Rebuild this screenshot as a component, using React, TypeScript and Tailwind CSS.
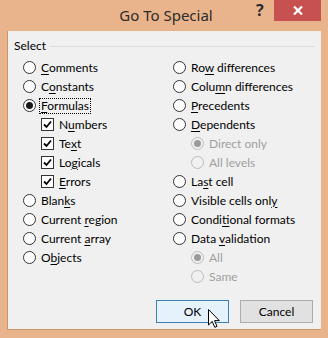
import React from "react";

// label uses "&" before the mnemonic letter
function Mnemonic({ text }: { text: string }) {
  const i = text.indexOf("&");
  if (i < 0) return <>{text}</>;
  return (
    <>
      {text.slice(0, i)}
      <span className="underline underline-offset-2">{text[i + 1]}</span>
      {text.slice(i + 2)}
    </>
  );
}

function Radio({ checked, disabled }: { checked?: boolean; disabled?: boolean }) {
  return (
    <span
      className={`w-[13px] h-[13px] rounded-full border flex items-center justify-center shrink-0 ${
        disabled ? "border-[#bcbcbc] bg-[#f0f0f0]" : "border-[#333333] bg-white"
      }`}
    >
      {checked && (
        <span className={`w-[7px] h-[7px] rounded-full ${disabled ? "bg-[#9a9a9a]" : "bg-[#1a1a1a]"}`} />
      )}
    </span>
  );
}

function Check() {
  return (
    <span className="w-[13px] h-[13px] border border-[#333333] bg-white flex items-center justify-center shrink-0">
      <svg width="9" height="9" viewBox="0 0 9 9">
        <path d="M1 4.5 L3.5 7 L8 1.5" fill="none" stroke="#000" strokeWidth="1.8" />
      </svg>
    </span>
  );
}

type Item = { label: string; kind: "radio" | "check"; checked?: boolean; disabled?: boolean; indent?: boolean; focus?: boolean };

const LEFT: Item[] = [
  { label: "&Comments", kind: "radio" },
  { label: "C&onstants", kind: "radio" },
  { label: "&Formulas", kind: "radio", checked: true, focus: true },
  { label: "N&umbers", kind: "check", indent: true },
  { label: "Te&xt", kind: "check", indent: true },
  { label: "Lo&gicals", kind: "check", indent: true },
  { label: "&Errors", kind: "check", indent: true },
  { label: "Blan&ks", kind: "radio" },
  { label: "Current &region", kind: "radio" },
  { label: "Current &array", kind: "radio" },
  { label: "O&bjects", kind: "radio" },
];

const RIGHT: Item[] = [
  { label: "Ro&w differences", kind: "radio" },
  { label: "Colu&mn differences", kind: "radio" },
  { label: "&Precedents", kind: "radio" },
  { label: "&Dependents", kind: "radio" },
  { label: "Direct only", kind: "radio", indent: true, disabled: true, checked: true },
  { label: "All levels", kind: "radio", indent: true, disabled: true },
  { label: "La&st cell", kind: "radio" },
  { label: "Visible cells onl&y", kind: "radio" },
  { label: "Condi&tional formats", kind: "radio" },
  { label: "Data &validation", kind: "radio" },
  { label: "All", kind: "radio", indent: true, disabled: true, checked: true },
  { label: "Same", kind: "radio", indent: true, disabled: true },
];

function Row({ item }: { item: Item }) {
  return (
    <div className={`h-[19px] flex items-center gap-[4px] ${item.indent ? "pl-[18px]" : ""}`}>
      {item.kind === "radio" ? <Radio checked={item.checked} disabled={item.disabled} /> : <Check />}
      <span
        className={`leading-[14px] px-px ${item.disabled ? "text-[#a0a0a0]" : "text-black"} ${
          item.focus ? "outline outline-1 outline-dotted outline-black" : ""
        }`}
      >
        <Mnemonic text={item.label} />
      </span>
    </div>
  );
}

export default function App() {
  return (
    <div
      className="w-[328px] h-[338px] bg-[#e9b48b] flex flex-col relative text-[12px]"
      style={{ fontFamily: 'Lato, "Noto Sans", sans-serif' }}
    >
      {/* title bar */}
      <div className="h-[31px] flex relative shrink-0">
        <div
          className="flex-1 flex justify-center pt-[4px] text-[15px] text-[#2b2b2b] pl-[4px]"
          style={{ fontFamily: '"Noto Sans", sans-serif' }}
        >
          Go To Special
        </div>
        <div
          className="absolute left-[256px] top-[1px] text-[16px] font-bold text-[#2b2b2b] leading-[18px]"
          style={{ fontFamily: '"Noto Sans", sans-serif' }}
        >
          ?
        </div>
        <div className="absolute right-[7px] top-0 w-[47px] h-[21px] bg-[#c75050] flex items-center justify-center">
          <svg width="10" height="9" viewBox="0 0 10 9">
            <path d="M1 0.5 L9 8.5 M9 0.5 L1 8.5" stroke="#fff" strokeWidth="2.2" />
          </svg>
        </div>
      </div>

      {/* client area */}
      <div className="mx-[7px] h-[299px] bg-[#f0f0f0] border-l border-b border-[#c9956d] flex flex-col">
        <div className="flex items-center pl-[6px] pr-[6px] mt-[7px] h-[16px]">
          <span className="text-black pr-[4px]">Select</span>
          <div className="flex-1 h-px bg-[#dcdcdc]" />
        </div>
        <div className="flex pl-[15px] mt-[4px]">
          <div className="w-[150px] flex flex-col">
            {LEFT.map((it) => (
              <Row key={it.label} item={it} />
            ))}
          </div>
          <div className="flex flex-col">
            {RIGHT.map((it) => (
              <Row key={it.label} item={it} />
            ))}
          </div>
        </div>
        <div className="flex justify-end gap-[11px] pr-[8px] mt-auto mb-[6px]">
          <button className="w-[73px] h-[23px] bg-[#e5f1fb] border border-[#3c7fb1] text-black">OK</button>
          <button className="w-[73px] h-[23px] bg-[#e1e1e1] border border-[#adadad] text-black">Cancel</button>
        </div>
      </div>

      {/* mouse pointer */}
      <svg className="absolute left-[208px] top-[309px]" width="12" height="19" viewBox="0 0 12 19">
        <path d="M0.5 0.5 L0.5 16 L4.2 12.4 L6.8 18.3 L9 17.3 L6.5 11.6 L11.3 11.6 Z" fill="#fff" stroke="#000" strokeWidth="1" strokeLinejoin="miter" />
      </svg>
    </div>
  );
}
